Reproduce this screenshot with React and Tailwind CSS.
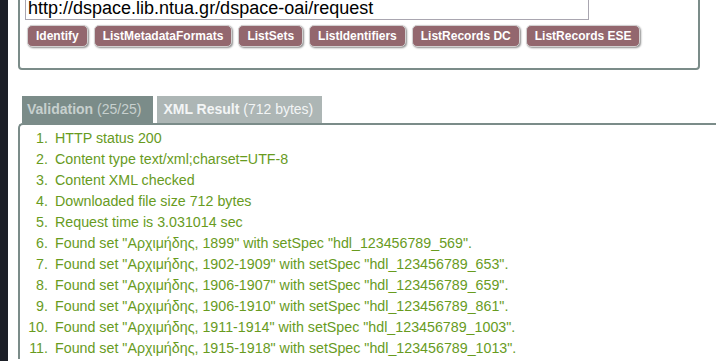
import React from 'react';

const buttons = ['Identify', 'ListMetadataFormats', 'ListSets', 'ListIdentifiers', 'ListRecords DC', 'ListRecords ESE'];

const checks = [
  'HTTP status 200',
  'Content type text/xml;charset=UTF-8',
  'Content XML checked',
  'Downloaded file size 712 bytes',
  'Request time is 3.031014 sec',
  'Found set "Αρχιμήδης, 1899" with setSpec "hdl_123456789_569".',
  'Found set "Αρχιμήδης, 1902-1909" with setSpec "hdl_123456789_653".',
  'Found set "Αρχιμήδης, 1906-1907" with setSpec "hdl_123456789_659".',
  'Found set "Αρχιμήδης, 1906-1910" with setSpec "hdl_123456789_861".',
  'Found set "Αρχιμήδης, 1911-1914" with setSpec "hdl_123456789_1003".',
  'Found set "Αρχιμήδης, 1915-1918" with setSpec "hdl_123456789_1013".',
];

export default function App() {
  return (
    <div className="flex h-[361px] overflow-hidden bg-[#1c1f27] font-['Liberation_Sans',Arial,sans-serif]">
      <div className="ml-[8px] flex-1 bg-white overflow-hidden">
        {/* request form */}
        <div className="mt-[-10px] ml-[10px] w-[682px] border-2 border-[#7b8c89] rounded-[4px] bg-white pt-[5px] pl-[5px] pb-[21px]">
          <div className="w-[564px] border border-[#a9a6b0] px-[2px] text-[18px] leading-[21px] text-black whitespace-nowrap overflow-hidden">
            http://dspace.lib.ntua.gr/dspace-oai/request
          </div>
          <div className="mt-[5px] ml-[2px] flex gap-[6px]">
            {buttons.map(b => (
              <button
                key={b}
                className="h-[22px] px-[8px] border border-[#d2d0d0] rounded-[5px] bg-[#93676e] text-white text-[12px] font-bold leading-[20px] shadow-[1px_1px_2px_rgba(0,0,0,0.45)] whitespace-nowrap"
              >
                {b}
              </button>
            ))}
          </div>
        </div>

        {/* result tabs */}
        <div className="mt-[26px] ml-[10px]">
          <div className="flex gap-[4px] pl-[4px] h-[27px] text-[14px] leading-[27px] whitespace-nowrap">
            <div className="bg-[#7b8c89] text-[#c7d0ce] pl-[5px] pr-[12px]">
              <span className="font-bold">Validation</span> (25/25)
            </div>
            <div className="bg-[#adb6b5] text-[#f3f5f5] pl-[6px] pr-[9px]">
              <span className="font-bold">XML Result</span> (712 bytes)
            </div>
          </div>
          <div className="border-l-2 border-t-2 border-[#7b8c89] rounded-tl-[5px] pt-[3px] pl-[8px]">
            {checks.map((c, i) => (
              <div key={i} className="flex gap-[7px] text-[14.25px] leading-[21px] text-[#689b1e] whitespace-nowrap">
                <span className="w-[20px] text-right">{i + 1}.</span>
                <span>{c}</span>
              </div>
            ))}
          </div>
        </div>
      </div>
    </div>
  );
}
